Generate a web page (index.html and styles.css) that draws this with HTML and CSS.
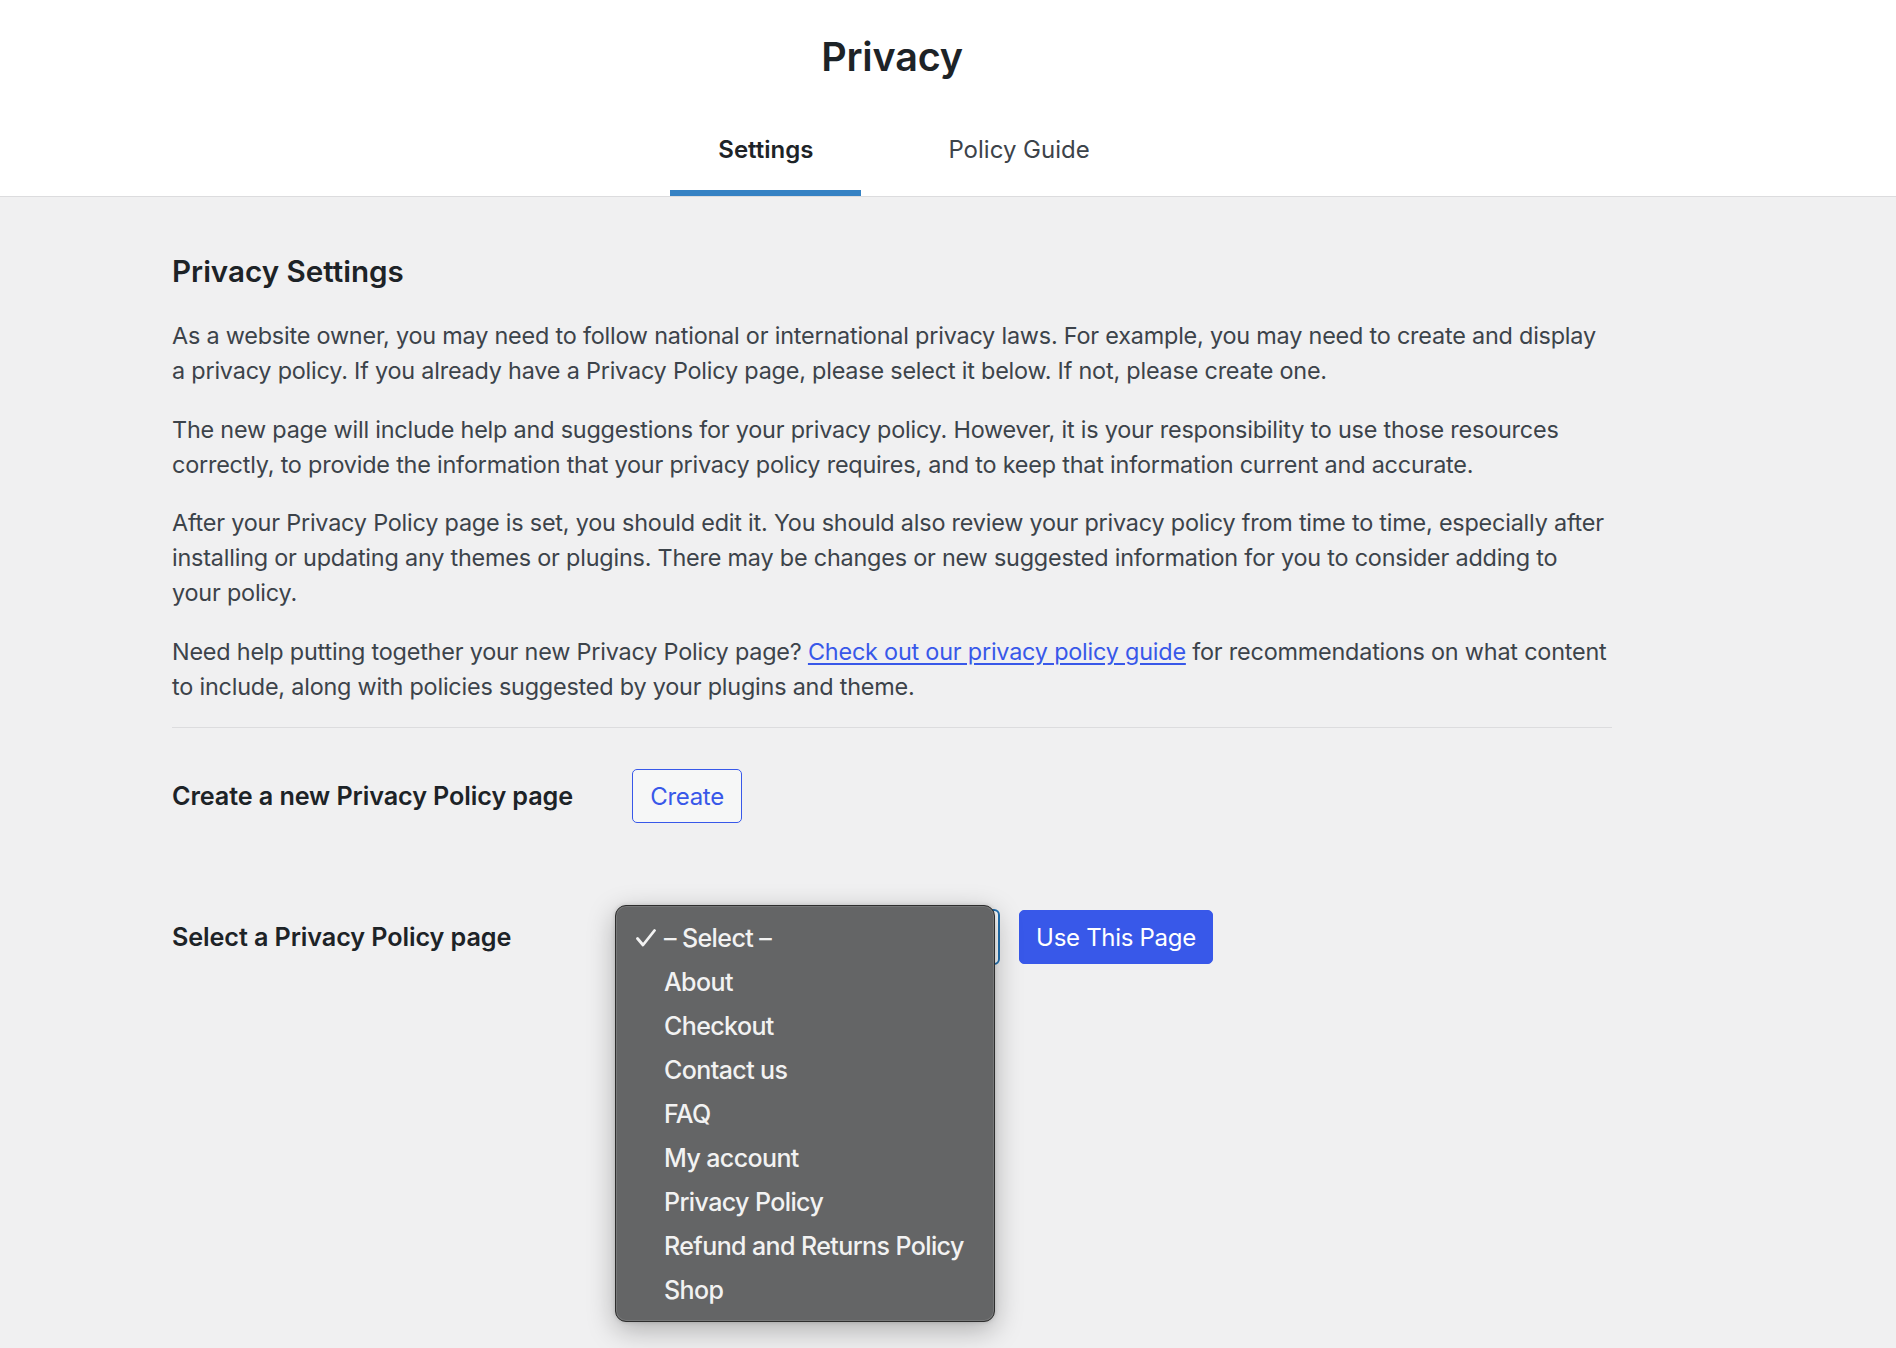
FILE: index.html
```html
<!DOCTYPE html>
<html lang="en">
<head>
<meta charset="utf-8">
<title>Privacy</title>
<link rel="stylesheet" href="styles.css">
</head>
<body>
<header class="header">
  <div class="header-inner">
    <h1 class="title">Privacy</h1>
    <nav class="tabs">
      <a class="tab tab-active" href="#">Settings</a>
      <a class="tab" href="#">Policy Guide</a>
    </nav>
  </div>
</header>
<main class="page">
  <div class="body">
    <h2 class="section-title">Privacy Settings</h2>
    <p>As a website owner, you may need to follow national or international privacy laws. For example, you may need to create and display a privacy policy. If you already have a Privacy Policy page, please select it below. If not, please create one.</p>
    <p>The new page will include help and suggestions for your privacy policy. However, it is your responsibility to use those resources correctly, to provide the information that your privacy policy requires, and to keep that information current and accurate.</p>
    <p>After your Privacy Policy page is set, you should edit it. You should also review your privacy policy from time to time, especially after installing or updating any themes or plugins. There may be changes or new suggested information for you to consider adding to your policy.</p>
    <p>Need help putting together your new Privacy Policy page? <a class="link" href="#">Check out our privacy policy guide</a> for recommendations on what content to include, along with policies suggested by your plugins and theme.</p>
    <hr class="divider">
    <div class="row row-create">
      <div class="label">Create a new Privacy Policy page</div>
      <button class="btn btn-secondary" type="button">Create</button>
    </div>
    <div class="row row-select">
      <div class="label">Select a Privacy Policy page</div>
      <div class="select-wrap">
        <div class="select"></div>
        <ul class="menu">
          <li class="menu-item checked"><svg class="check" width="20" height="18" viewBox="0 0 20 18"><path d="M1.5 9.5 L7 16 L18.5 1.5" fill="none" stroke="#f2f2f2" stroke-width="2.8" stroke-linecap="round" stroke-linejoin="round"/></svg>– Select –</li>
          <li class="menu-item">About</li>
          <li class="menu-item">Checkout</li>
          <li class="menu-item">Contact us</li>
          <li class="menu-item">FAQ</li>
          <li class="menu-item">My account</li>
          <li class="menu-item">Privacy Policy</li>
          <li class="menu-item">Refund and Returns Policy</li>
          <li class="menu-item">Shop</li>
        </ul>
      </div>
      <button class="btn btn-primary" type="button">Use This Page</button>
    </div>
  </div>
</main>
</body>
</html>
```
FILE: styles.css
```css
html, body {
  margin: 0;
  padding: 0;
}
body {
  background: #f0f0f1;
  font-family: Inter, "Noto Sans", "Liberation Sans", sans-serif;
  color: #3c434a;
  min-height: 1348px;
}
.header {
  background: #ffffff;
  border-bottom: 1px solid #dcdcde;
}
.header-inner {
  width: 1784px;
  display: flex;
  flex-direction: column;
  align-items: center;
}
.title {
  margin: 0;
  padding-top: 31px;
  font-size: 39.5px;
  line-height: 53px;
  font-weight: 600;
  color: #1d2327;
  letter-spacing: -0.2px;
}
.tabs {
  display: flex;
  gap: 39px;
  margin-top: 34px;
  padding-left: 24px;
}
.tab {
  display: block;
  padding: 14px 48px 28px;
  font-size: 24px;
  line-height: 36px;
  color: #3c434a;
  text-decoration: none;
}
.tab-active {
  font-weight: 600;
  color: #1d2327;
  box-shadow: inset 0 -6px #3582c4;
}
.page {
  width: 1784px;
}
.body {
  width: 1440px;
  margin: 0 auto;
  padding-top: 55px;
  font-size: 23.4px;
  line-height: 35.1px;
}
.section-title {
  margin: 0 0 27px;
  font-size: 29.6px;
  line-height: 39px;
  font-weight: 600;
  color: #1d2327;
}
.body p {
  margin: 0 0 23.4px;
  letter-spacing: -0.2px;
}
.link {
  color: #3858e9;
  text-decoration: underline;
  text-underline-offset: 3px;
}
.divider {
  border: 0;
  border-top: 1px solid #dcdcde;
  margin: 22px 0 0;
}
.row {
  display: flex;
  align-items: center;
}
.row-create {
  margin-top: 41px;
}
.row-select {
  margin-top: 86px;
}
.label {
  width: 460px;
  flex: none;
  font-size: 25.2px;
  font-weight: 600;
  color: #1d2327;
  letter-spacing: -0.1px;
}
.btn {
  font-family: inherit;
  font-size: 24px;
  height: 54px;
  border-radius: 5px;
  cursor: pointer;
  letter-spacing: -0.3px;
}
.btn-secondary {
  width: 110px;
  background: #f6f7f7;
  border: 1.5px solid #3858e9;
  color: #3858e9;
}
.btn-primary {
  width: 194px;
  margin-left: 19px;
  background: #3858e9;
  border: 1px solid #3858e9;
  color: #ffffff;
}
.select-wrap {
  position: relative;
  width: 368px;
  height: 56px;
}
.select {
  box-sizing: border-box;
  width: 368px;
  height: 56px;
  background: #ffffff;
  border: 2px solid #2271b1;
  border-radius: 6px;
}
.menu {
  position: absolute;
  left: -17px;
  top: -4px;
  box-sizing: border-box;
  width: 380px;
  margin: 0;
  padding: 10px 0 9px;
  list-style: none;
  background: #646566;
  border: 1px solid #2e2e2e;
  border-radius: 11px;
  box-shadow: inset 0 0 0 1px rgba(255,255,255,0.12), 0 8px 28px rgba(0,0,0,0.28), 0 0 4px rgba(0,0,0,0.15);
}
.menu-item {
  position: relative;
  height: 44px;
  line-height: 44px;
  padding-left: 48px;
  font-size: 25px;
  font-weight: 500;
  color: #f2f2f2;
  letter-spacing: -0.6px;
}
.check {
  position: absolute;
  left: 20px;
  top: 13px;
}
```
